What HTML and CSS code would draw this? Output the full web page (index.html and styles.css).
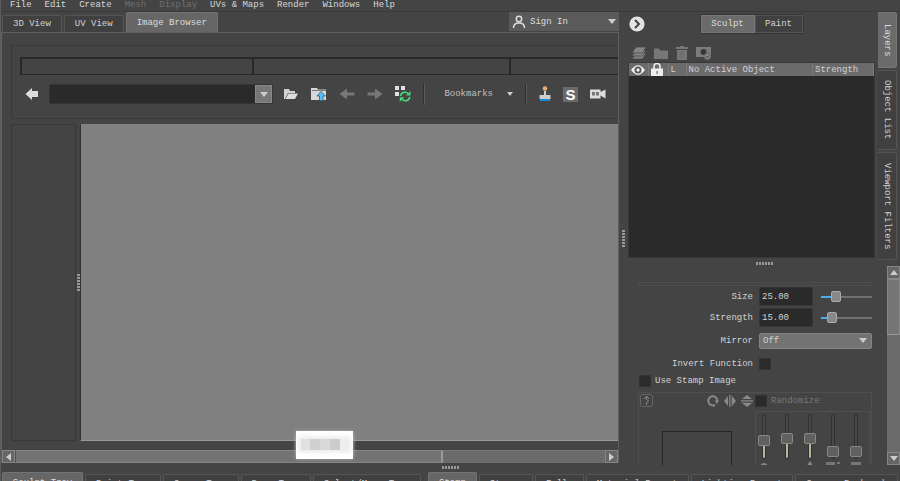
FILE: index.html
```
<!DOCTYPE html>
<html lang="en">
<head>
<meta charset="utf-8">
<title>Image Browser</title>
<link rel="stylesheet" href="styles.css">
</head>
<body>
<nav class="menubar">
  <button>File</button><button>Edit</button><button>Create</button><button disabled>Mesh</button><button disabled>Display</button><button>UVs &amp; Maps</button><button>Render</button><button>Windows</button><button>Help</button>
</nav>
<main class="workspace">
  <section class="viewer">
    <div class="tabrow">
      <button class="tab">3D View</button><button class="tab">UV View</button><button class="tab active">Image Browser</button>
      <button class="signin">
        <svg width="14" height="14" viewBox="0 0 14 14" fill="none" stroke="#ddd" stroke-width="1.5"><circle cx="7" cy="4" r="2.7"/><path d="M1.5 13c0-3 2-5 5.500-5s5.500 2 5.500 5"/></svg>
        <span>Sign In</span><i class="caret"></i>
      </button>
    </div>
    <div class="browser">
      <div class="toolbox">
        <div class="columns"><div></div><div></div><div></div></div>
        <div class="toolbar">
          <button aria-label="Back"><svg width="14" height="12" viewBox="0 0 14 12"><path d="M0.500 6 7 0v3h6v6H7v3z" fill="#ddd"/></svg></button>
          <div class="path"><input aria-label="Path"><button aria-label="History"><i class="caret"></i></button></div>
          <button aria-label="Open folder"><svg width="16" height="12" viewBox="0 0 16 12"><path d="M1 11V1h5l1 2h5v2H5L2 11z" fill="#d2d2d2"/><path d="M5.500 5.500H15L12 11H2.500z" fill="#ddd"/></svg></button>
          <button aria-label="Parent folder"><svg width="16" height="14" viewBox="0 0 16 14"><path d="M0 13V1h6l1 1.500h8V13z" fill="#d8d8d8"/><path d="M1 3.500h14" stroke="#777"/><path d="M10 4.500 14.500 9H12v4.500H8.500V9H6z" fill="#58bdf5" stroke="#3c596b" stroke-width=".8"/></svg></button>
          <button aria-label="Previous" disabled><svg width="16" height="12" viewBox="0 0 16 12"><path d="M0.500 6 8 .5v4h7.500v3H8v4z" fill="#777"/></svg></button>
          <button aria-label="Next" disabled><svg width="16" height="12" viewBox="0 0 16 12"><path d="M15.500 6 8 .5v4H.5v3H8v4z" fill="#777"/></svg></button>
          <button aria-label="Refresh"><svg width="16" height="16" viewBox="0 0 16 16"><path d="M0 0h4v4H0zM6 0h4v4H6zM0 6h4v4H0z" fill="#e2e2e2"/><path d="M5.500 10a4.500 4.500 0 0 1 8-2M14.800 11a4.500 4.500 0 0 1-8 2" fill="none" stroke="#4bd47b" stroke-width="1.600"/><path d="M15.500 5v4.500H11zM4.800 15.800v-4.500h4.500z" fill="#4bd47b"/></svg></button>
          <i class="divider"></i>
          <button class="bookmarks">Bookmarks<i class="caret small"></i></button>
          <i class="divider"></i>
          <button aria-label="Stamp"><svg width="12" height="16" viewBox="0 0 12 16"><circle cx="6" cy="2.500" r="2.300" fill="#e2b06d"/><path d="M5 5h2v4h4.500v4H.5V9H5z" fill="#ccc"/><path d="M1 13h10v2H1z" fill="#168bdc"/></svg></button>
          <button class="stencil" aria-label="Stencil">S</button>
          <button aria-label="Camera"><svg width="16" height="10" viewBox="0 0 16 10"><path d="M0 .5h10.500V3L15.500.5v9l-5-3v3H0z" fill="#ddd"/><path d="M2 3h3v3.500H2zM6 3h3v3.500H6z" fill="#777"/></svg></button>
        </div>
      </div>
      <div class="content"><div class="folders"></div><i class="grip vertical"></i><div class="canvas"></div></div>
      <div class="notice"><i></i></div>
      <div class="hscroll"><button aria-label="Scroll left"><i class="caret left"></i></button><div class="thumb"></div><div class="rest"></div><button aria-label="Scroll right"><i class="caret right"></i></button></div>
    </div>
  </section>
  <div class="splitter"><i class="grip vertical"></i></div>
  <aside class="side">
    <div class="upper">
      <div class="layers">
        <div class="modes">
          <button class="expand" aria-label="Collapse"><svg width="16" height="16" viewBox="0 0 16 16"><circle cx="8" cy="8" r="7.600" fill="#e4e4e4"/><path d="m6 4 4 4-4 4" fill="none" stroke="#444" stroke-width="2"/></svg></button>
          <div class="switch"><button class="on">Sculpt</button><button>Paint</button></div>
        </div>
        <div class="layertools">
          <button aria-label="New layer"><svg width="14" height="14" viewBox="0 0 14 14" fill="#858585" stroke="#444" stroke-width=".7"><path d="M4 7.500h10l-3.500 5.500H0z"/><path d="M4 4.500h10L10.500 10H0z"/><path d="M4 1h10l-3.500 6H0z"/></svg></button>
          <button aria-label="New group"><svg width="14" height="14" viewBox="0 0 14 14"><path d="M0 2.500h5l1 2h8V13H0z" fill="#777"/></svg></button>
          <button aria-label="Delete"><svg width="12" height="14" viewBox="0 0 12 14"><path d="M4 0h4v1h4v2H0V1h4zM1 4h10v10H1z" fill="#777"/><path d="M4 5.500v7M6 5.500v7M8 5.500v7" stroke="#666" stroke-width=".7"/></svg></button>
          <button aria-label="Layer mask"><svg width="16" height="14" viewBox="0 0 16 14"><path d="M0 1h15v10H0z" fill="#7c7c7c"/><circle cx="7.500" cy="6" r="3" fill="#383838"/><circle cx="11.500" cy="10.500" r="3.300" fill="#858585" stroke="#555" stroke-width=".6"/><path d="m10 10.500 1.500 1 1.500-2" fill="none" stroke="#444"/></svg></button>
        </div>
        <div class="layerlist">
          <table><colgroup><col class="c-eye"><col class="c-lock"><col class="c-l"><col><col class="c-strength"></colgroup>
          <tr><th aria-label="Visible"><svg width="14" height="12" viewBox="0 0 14 12"><path d="M0 6q7-9.500 14 0Q7 15.500 0 6z" fill="#eee"/><circle cx="7" cy="6" r="3.500" fill="#555"/><circle cx="7" cy="6" r="1.700" fill="#eee"/></svg></th><th aria-label="Locked"><svg width="12" height="13" viewBox="0 0 12 13"><path d="M3 6V3.500a3 3 0 0 1 6 0V6" fill="none" stroke="#eee" stroke-width="1.600"/><path d="M0 5.500h12V13H0z" fill="#eee"/><path d="M5.500 8h1.200v3H5.500z" fill="#666"/></svg></th><th>L</th><th>No Active Object</th><th>Strength</th></tr></table>
        </div>
      </div>
      <div class="vtabs"><button class="active">Layers</button><button>Object List</button><button>Viewport Filters</button></div>
    </div>
    <i class="grip horizontal"></i>
    <div class="lower">
      <form class="props">
        <div class="rule"></div>
        <div class="row"><label for="size">Size</label><input id="size" class="num" value="25.00"><input class="range r25" type="range" value="25" aria-label="Size slider"></div>
        <div class="row"><label for="strength">Strength</label><input id="strength" class="num" value="15.00"><input class="range r15" type="range" value="15" aria-label="Strength slider"></div>
        <div class="row mirror"><label for="mirror">Mirror</label><div class="select"><select id="mirror"><option>Off</option></select><i class="caret"></i></div></div>
        <div class="row invert"><label for="invert">Invert Function</label><input id="invert" type="checkbox"></div>
        <div class="stampuse"><input id="usestamp" type="checkbox"><label for="usestamp">Use Stamp Image</label></div>
        <div class="stampbox">
          <div class="preview">
            <div class="picons">
              <svg class="first" width="13" height="13" viewBox="0 0 13 13" fill="none" stroke="#888"><rect x=".5" y=".5" width="12" height="12" rx="2" stroke="#666"/><path d="M4 5 6.500 2 9 5M6.500 3v2l2 2-2 2v2"/></svg>
              <svg width="12" height="12" viewBox="0 0 12 12"><path d="M8 10A4.600 4.600 0 1 1 10.500 6" fill="none" stroke="#888" stroke-width="2"/><path d="M7.500 5.500H12L10 9z" fill="#888"/></svg>
              <svg width="12" height="12" viewBox="0 0 12 12" fill="#888"><path d="M4 1v10L0 6zM8 1v10l4-5zM5 0h.8v12H5zM6.500 0h.8v12h-.8z"/></svg>
              <svg width="12" height="12" viewBox="0 0 12 12" fill="#888"><path d="M1 4h10L6 0zM1 8h10l-5 4zM0 5h12v.8H0zM0 6.500h12v.8H0z"/></svg>
            </div>
            <div class="image"></div>
          </div>
          <div class="random">
            <div class="rlabel"><input id="random" type="checkbox"><label for="random">Randomize</label></div>
            <div class="faders">
              <div><input type="range" value="37" class="lit" aria-label="Random rotation"><svg width="10" height="6" viewBox="0 0 10 6"><path d="M0 6q5-8 10 0z" fill="#888"/></svg></div>
              <div><input type="range" value="43" class="lit" aria-label="Random strength"></div>
              <div><input type="range" value="43" class="lit" aria-label="Random size"><svg width="8" height="6" viewBox="0 0 8 6"><path d="M0 6 4 0l4 6z" fill="#888"/></svg></div>
              <div><input type="range" value="4" aria-label="Random horizontal"><svg width="14" height="6" viewBox="0 0 14 6"><path d="M0 1h9v5H0zM11 1h3v2h-3z" fill="#777"/></svg></div>
              <div><input type="range" value="4" aria-label="Random vertical"><svg width="10" height="6" viewBox="0 0 10 6"><path d="M0 1h10v5H0z" fill="#777"/></svg></div>
            </div>
          </div>
        </div>
      </form>
      <div class="vscroll"><button aria-label="Scroll up"><i class="caret up"></i></button><div class="thumb"></div><div class="rest"></div><button aria-label="Scroll down"><i class="caret"></i></button></div>
    </div>
  </aside>
</main>
<footer class="trays">
  <i class="grip horizontal"></i>
  <div class="trayrow">
    <button class="tab active">Sculpt Tray</button><button class="tab">Paint Tray</button><button class="tab">Curve Tray</button><button class="tab">Pose Tray</button><button class="tab">Select/Move Tray</button><i class="gap"></i><button class="tab active">Stamp</button><button class="tab">Stamps</button><button class="tab">Falls</button><button class="tab">Material Preset</button><button class="tab">Lighting Preset</button><button class="tab">Camera Bookmark</button>
  </div>
</footer>
</body>
</html>
```
FILE: styles.css
```
* { box-sizing: border-box; }
body {
  margin: 0; height: 100vh; overflow: hidden; display: flex; flex-direction: column;
  background: #444; color: #d2d2d2; font: 9px/12px "Liberation Mono", monospace;
  border-left: 1px solid #5d5d5d;
}
button, input, select { font: inherit; color: inherit; margin: 0; padding: 0; border: 0; background: none; border-radius: 0; white-space: nowrap; }
svg { display: block; }
input[type=checkbox] { appearance: none; width: 12px; height: 12px; background: #2b2b2b; border: 1px solid #333; flex: none; }

.menubar { display: flex; gap: 13px; height: 12px; padding-left: 9px; align-items: end; border-bottom: 1px solid #3a3a3a; flex: none; }
.menubar button { height: 13px; color: #d8d8d8; }
.menubar button:disabled { color: #707070; }

.workspace { flex: 1; min-height: 0; display: flex; }
.viewer { flex: 1; min-width: 0; display: flex; flex-direction: column; }
.tabrow { display: flex; gap: 2px; height: 20px; align-items: end; padding-left: 1px; flex: none; }
.tab { height: 17px; padding: 0 10px; background: #404040; border: 1px solid #555; border-bottom: 0; border-radius: 2px 2px 0 0; }
.tab.active { height: 20px; background: #666; border-color: #737373; color: #ddd; }
.signin { margin-left: auto; align-self: start; width: 110px; height: 19px; background: #5a5a5a; display: flex; align-items: center; gap: 4px; padding: 0 3px; color: #ddd; }
.signin .caret { margin-left: auto; }

.caret { display: block; width: 0; height: 0; border: 4px solid transparent; border-top: 5px solid #ccc; border-bottom: 0; }
.caret.small { border-width: 4px 3px 0; }
.caret.up { border-top: 0; border-bottom: 5px solid #ccc; }
.caret.left { border: 4px solid transparent; border-left: 0; border-right: 5px solid #ccc; }
.caret.right { border: 4px solid transparent; border-right: 0; border-left: 5px solid #ccc; }

.browser { flex: 1; min-height: 0; display: flex; flex-direction: column; position: relative; border: 1px solid #606060; border-bottom: 0; margin-bottom: 2px; }
.toolbox { margin: 12px 0 0 9px; border: 1px solid #393939; border-right: 0; height: 74px; padding: 11px 0 0 8px; flex: none; }
.columns { display: grid; grid-template-columns: 230fr 258fr 109fr; height: 18px; border: 2px solid #282828; border-right: 0; border-bottom-width: 1px; }
.columns div + div { border-left: 2px solid #282828; }
.toolbar { display: flex; align-items: center; height: 22px; margin-top: 8px; gap: 12px; padding: 0 12px 0 5px; }
.path { display: flex; flex: 1; min-width: 0; height: 20px; border: 1px solid #353535; border-radius: 2px; background: #2a2a2a; margin: 0 -2px; }
.path input { flex: 1; min-width: 0; }
.path button { width: 17px; background: #777; border: 1px solid #888; display: grid; place-items: center; }
.divider { width: 2px; height: 21px; background: #303030; border-right: 1px solid #5b5b5b; }
.bookmarks { display: flex; align-items: center; gap: 14px; padding-left: 7px; color: #c0c0c0; }
.stencil { width: 15px; height: 15px; background: #6b6b6b; color: #fff; font: bold 15px/15px "Liberation Sans", sans-serif; }
.content { flex: 1; min-height: 0; display: flex; margin: 5px 0 9px 9px; }
.folders { width: 65px; border: 1px solid #393939; }
.content .grip { margin: 0 0 0 1px; align-self: center; }
.canvas { flex: 1; background: #808080; border-bottom: 1px solid #999; border-left: 1px solid #333; }
.hscroll { display: flex; height: 13px; flex: none; background: #6b6b6b; }
.hscroll button, .vscroll button { width: 13px; height: 13px; border: 1px solid #858585; display: grid; place-items: center; background: #666; flex: none; }
.hscroll .thumb { flex: 428; background: #737373; border: 1px solid #868686; border-left: 1px solid #505050; border-right: 2px solid #999; }
.hscroll .rest { flex: 163; border-top: 1px solid #777; }
.notice { position: absolute; left: calc(50% - 14px); bottom: 4px; width: 57px; height: 28px; background: #fff; box-shadow: 0 0 4px #aaa; padding: 8px 5px; }
.notice i { display: block; height: 11px; background: linear-gradient(90deg, #e0e0e0 20%, #d0d0d0 20% 40%, #d9d9d9 40% 62%, #ccc 62% 82%, #eee 82%); box-shadow: 0 0 4px 3px #eee; }

.grip { display: block; flex: none; }
.grip.vertical { width: 3px; height: 17px; background: repeating-linear-gradient(#999 0 2px, transparent 2px 3px); }
.grip.horizontal { width: 17px; height: 3px; background: repeating-linear-gradient(90deg, #999 0 2px, transparent 2px 3px); }
.splitter { width: 9px; display: flex; align-items: center; justify-content: center; }

.side { width: 272px; display: flex; flex-direction: column; flex: none; }
.upper { height: 248px; display: flex; flex: none; gap: 3px; }
.layers { flex: 1; display: flex; flex-direction: column; }
.modes { display: grid; grid-template-columns: 1fr auto 1fr; padding: 0 1px; height: 24px; align-items: center; }
.switch { display: flex; height: 20px; border: 1px solid #353535; border-radius: 3px; }
.switch button { width: 48px; background: #404040; border: 1px solid #555; }
.switch button.on { width: 54px; background: #6b6b6b; border-color: #777; color: #ddd; }
.layertools { display: flex; gap: 8px; padding: 7px 4px 0; height: 26px; }
.layerlist { flex: 1; background: #2a2a2a; border: 1px solid #383838; margin-bottom: 2px; }
table { width: 100%; border-collapse: collapse; table-layout: fixed; background: #6b6b6b; }
th { height: 13px; padding: 0 2px; font-weight: normal; text-align: left; line-height: 12px; border-right: 1px solid #7c7c7c; }
.c-eye { width: 19px; } .c-lock { width: 20px; } .c-l { width: 18px; } .c-strength { width: 61px; }
.vtabs { width: 19px; margin-right: 3px; display: flex; flex-direction: column; gap: 2px; }
.vtabs button { writing-mode: vertical-rl; background: #404040; border: 1px solid #555; border-left: 0; border-radius: 0 3px 3px 0; flex: 107; }
.vtabs button:first-child { flex: 54; }
.vtabs button:nth-child(2) { flex: 79; }
.vtabs .active { background: #6b6b6b; border-color: #777; color: #ddd; }
.side > .grip { margin: 2px auto 1px 128px; }
.lower { flex: 1; min-height: 0; display: flex; }
.props { flex: 1; min-width: 0; padding: 16px 15px 0 10px; overflow: hidden; }
.rule { height: 4px; border: 1px solid #4d4d4d; }
.row { display: grid; grid-template-columns: 1fr 56px 51px; gap: 6px; align-items: center; height: 21px; }
.row label { text-align: right; }
.num { width: 54px; height: 19px; background: #2a2a2a; border: 1px solid #353535; border-radius: 2px; padding: 0 2px; }
.range { appearance: none; width: 51px; height: 12px; }
.range::-webkit-slider-runnable-track { height: 2px; background: #707070; }
.r25::-webkit-slider-runnable-track { background: linear-gradient(90deg, #4babed 25%, #707070 25%); }
.r15::-webkit-slider-runnable-track { background: linear-gradient(90deg, #4babed 15%, #707070 15%); }
.range::-webkit-slider-thumb { appearance: none; width: 10px; height: 11px; margin-top: -5px; background: #888; border: 1px solid #aaa; border-radius: 2px; }
.row.mirror { height: 25px; }
.select { grid-column: 2 / 4; display: flex; align-items: center; height: 16px; background: #737373; border: 1px solid #858585; border-radius: 2px; padding-right: 4px; }
.select select { appearance: none; flex: 1; padding-left: 3px; }
.stampuse, .rlabel { display: flex; align-items: center; gap: 4px; }
.stampuse { height: 14px; margin: 0 0 4px 1px; }
.stampbox { display: flex; justify-content: space-between; border: 1px solid #4f4f4f; height: 90px; padding: 1px 1px 0; }
.preview { width: 113px; }
.picons { display: flex; gap: 5px; align-items: center; }
.picons .first { margin-right: auto; }
.image { width: 70px; height: 60px; margin: 24px 0 0 22px; border: 1px solid #252525; }
.rlabel { color: #777; height: 13px; }
.faders { display: flex; justify-content: space-between; border: 1px solid #4f4f4f; width: 115px; height: 75px; margin-top: 4px; padding: 2px 7px 0 2px; }
.faders div { width: 12px; display: flex; flex-direction: column; align-items: center; gap: 2px; }
.faders svg { flex: none; }
.faders input { appearance: none; writing-mode: vertical-lr; direction: rtl; width: 12px; height: 45px; flex: none; }
.faders input::-webkit-slider-runnable-track { width: 4px; background: #484848; border: 1px solid #303030; border-radius: 2px; }
.faders .lit::-webkit-slider-runnable-track { background: linear-gradient(#484848 65%, #bdb69d 65%); }
.faders input::-webkit-slider-thumb { appearance: none; width: 12px; height: 11px; margin-right: -5px; margin-left: -5px; background: #606060; border: 1px solid #888; border-radius: 2px; }
.vscroll { width: 13px; display: flex; flex-direction: column; background: #6b6b6b; }
.vscroll .thumb { flex: 55; background: #757575; border: 1px solid #888; border-bottom-color: #999; }
.vscroll .rest { flex: 119; }

.trays { height: 16px; flex: none; overflow: hidden; display: flex; flex-direction: column; }
.trays .grip { margin: 1px auto 3px; }
.trayrow { display: flex; gap: 2px; align-items: end; height: 20px; flex: none; padding: 0 2px 0 1px; }
.trayrow .gap { width: 3px; }
.trayrow .tab { height: 18px; padding: 0 9px; flex: auto; }
.trayrow .tab.active { height: 20px; }
```
